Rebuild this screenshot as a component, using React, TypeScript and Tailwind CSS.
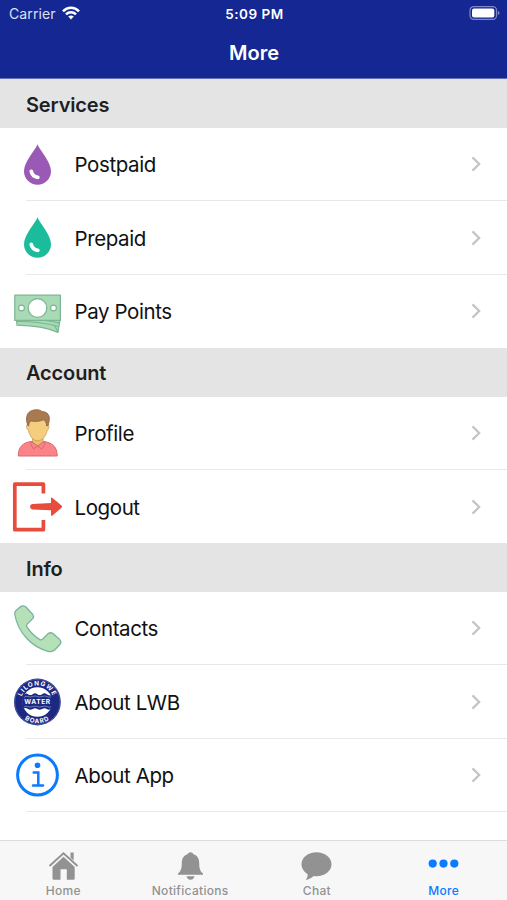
import React from 'react';

function DropIcon({ color }: { color: string }) {
  return (
    <svg viewBox="0 0 51 51" className="w-[51px] h-[51px]">
      <path d="M25.500 5.200C27.500 11 39 22.500 39 32.300A13.500 13.500 0 0 1 12 32.300C12 22.500 23.500 11 25.500 5.200Z" fill={color} />
      <path d="M19.300 32.300C19.800 35.300 22.300 37.800 25.800 38.300" fill="none" stroke="#fff" strokeWidth="3.800" strokeLinecap="round" />
    </svg>
  );
}

function MoneyIcon() {
  return (
    <svg viewBox="0 0 51 51" className="w-[51px] h-[51px]" stroke="#7cb592" strokeWidth="1.200" strokeLinejoin="round">
      <path d="M4.500 34H48L46 46.500C35 41.500 20 39.500 5 39.200Z" fill="#a9dab6" />
      <path d="M5 35.500C20 35.500 34 37 46.500 40.500" fill="none" />
      <path d="M33 34.500C38 35 43 36 47.300 37.200M42.500 39.500L46 46" fill="none" />
      <rect x="2.800" y="9.200" width="45.600" height="25.200" fill="#a9dab6" />
      <circle cx="25.500" cy="22" r="9.300" fill="#fff" />
      <circle cx="9.500" cy="22" r="2.900" fill="#fff" />
      <circle cx="41.500" cy="22" r="2.900" fill="#fff" />
    </svg>
  );
}

function ProfileIcon() {
  return (
    <svg viewBox="0 0 51 51" className="w-[51px] h-[51px]" strokeLinejoin="round">
      <path d="M6.300 49C6.300 39.500 11 35.800 19 34.500H32C40 35.800 45.200 39.500 45.200 49Z" fill="#fb8488" stroke="#d9686e" />
      <path d="M20.500 30V35L25.500 40L31 35V30Z" fill="#edbf6d" stroke="#c99a55" strokeWidth="0.800" />
      <path d="M19.500 34.500L18.500 37L21.500 42L25.600 38.800L29.800 42L33 37L31.800 34.500L25.600 39Z" fill="#fb8488" stroke="#d9686e" />
      <path d="M16 17C13.800 17 14.200 22.500 16.500 23.200C17.500 29 21 33.800 25.600 33.800S34.200 29 35.200 23.200C37.300 22.500 37.600 17 35.500 17L34 10H18Z" fill="#f5cd7f" stroke="#c99a55" strokeWidth="0.800" />
      <path d="M15.800 18.500C12.500 9 15.500 2.700 25 2.700C27.500 2.700 28.500 3.500 30 4.500C38 4.800 38.500 11.500 36 18.500L34.700 19C34.500 16 33.500 14 31.500 12.800C27 15 21 14.500 18.800 14C17.200 15.500 16.800 17 16.800 19Z" fill="#a97950" stroke="#89633f" strokeWidth="0.800" />
    </svg>
  );
}

function LogoutIcon() {
  return (
    <svg viewBox="0 0 51 51" className="w-[51px] h-[51px]" fill="#e74c3c">
      <path d="M31.400 12.500V3.200H2.800V48.700H31.400V39" fill="none" stroke="#e74c3c" strokeWidth="3.700" strokeLinejoin="round" />
      <path d="M20.500 23L39 22V17.500Q39 16 40.500 17L49.500 24.500Q50.500 25.700 49.500 26.800L40.500 34.400Q39 35.500 39 33.900V29.200L20.500 28.400Q18 28 18 25.700T20.500 23Z" />
    </svg>
  );
}

function PhoneIcon() {
  return (
    <svg viewBox="0 0 51 51" className="w-[51px] h-[51px]">
      <path
        d="M2.800 11.500Q2.200 9.300 3.800 7.700L8.600 3.600Q11 2 13.600 3.700L20.800 11.500Q22.200 13.600 20.900 15.400L15 21.300Q14.100 22.500 14.800 23.700C18.300 29.500 22.800 33.600 27.800 36.600Q29.400 37.200 30.500 36.200L36 30.800Q38.500 28.900 41 30.500L47.700 36.600Q49.600 38.700 48.300 41L43 46.800Q40 49.500 36 48.300C19.500 44 6 29.500 2.800 11.500Z"
        fill="#b5e0b8"
        stroke="#79b3a0"
        strokeWidth="1.300"
        strokeLinejoin="round"
      />
    </svg>
  );
}

function BoardIcon() {
  return (
    <svg viewBox="0 0 51 51" className="w-[51px] h-[51px]">
      <defs>
        <path id="seal-top" d="M8.800 26A16.600 16.600 0 0 1 42 26" />
        <path id="seal-bottom" d="M4.100 26A21.300 21.300 0 0 0 46.700 26" />
      </defs>
      <circle cx="25.400" cy="26" r="23.400" fill="#1b2983" />
      <circle cx="25.400" cy="26" r="22.600" fill="none" stroke="#8d95c6" strokeWidth="0.400" />
      <circle cx="25.400" cy="26" r="14.800" fill="#fff" />
      <path d="M11.500 19.500Q13.500 16.500 16 18.200T20.700 18.200T25.400 18.200T30.100 18.200T34.800 18.200T39.500 19.500L41 26L39.500 32.500Q37 34.500 34.800 33T30.100 33T25.400 33T20.700 33T16 33T11.500 32.500L10 26Z" fill="#1b2983" />
      <path d="M12 21.500Q14 19.500 16 20.500T20.700 20.500T25.400 20.500T30.100 20.500T34.800 20.500T39 21M12 31Q14 29.600 16 30.600T20.700 30.600T25.400 30.600T30.100 30.600T34.800 30.600T39 31" fill="none" stroke="#aab0d8" strokeWidth="0.600" />
      <g fill="#fff" fontFamily="Inter, sans-serif" fontWeight="700" textAnchor="middle">
        <text x="25.600" y="28.300" fontSize="6.600" letterSpacing="0.600">WATER</text>
        <text fontSize="6.300" letterSpacing="0.900">
          <textPath href="#seal-top" startOffset="50%">LILONGWE</textPath>
        </text>
        <text fontSize="6.300" letterSpacing="1">
          <textPath href="#seal-bottom" startOffset="50%">BOARD</textPath>
        </text>
      </g>
    </svg>
  );
}

function InfoIcon() {
  return (
    <svg viewBox="0 0 51 51" className="w-[51px] h-[51px]" fill="none" stroke="#0a7aff" strokeWidth="2.500" strokeLinecap="round">
      <circle cx="25.500" cy="26" r="19.900" strokeWidth="3" />
      <circle cx="25.500" cy="16.300" r="2.800" fill="#0a7aff" stroke="none" />
      <path d="M21.700 23.500H26.300V36.500M21 36.500H31" />
    </svg>
  );
}

const sections = [
  {
    title: 'Services',
    items: [
      { label: 'Postpaid', icon: <DropIcon color="#9b59b6" /> },
      { label: 'Prepaid', icon: <DropIcon color="#1abc9c" /> },
      { label: 'Pay Points', icon: <MoneyIcon /> },
    ],
  },
  {
    title: 'Account',
    items: [
      { label: 'Profile', icon: <ProfileIcon /> },
      { label: 'Logout', icon: <LogoutIcon /> },
    ],
  },
  {
    title: 'Info',
    items: [
      { label: 'Contacts', icon: <PhoneIcon /> },
      { label: 'About LWB', icon: <BoardIcon /> },
      { label: 'About App', icon: <InfoIcon /> },
    ],
  },
];

const tabs = [
  {
    label: 'Home',
    icon: (
      <>
        <path d="M1.500 15L15.500 2.200L29.500 15" fill="none" stroke="currentColor" strokeWidth="1.900" />
        <path d="M22.500 1.500H25.700V9.500L22.500 6.600Z" />
        <path d="M15.500 5.800L26.700 16V27.500Q26.700 28.800 25.400 28.800H18.800V18.300H12.500V28.800H5.800Q4.500 28.800 4.500 27.500V16Z" />
      </>
    ),
  },
  {
    label: 'Notifications',
    icon: (
      <>
        <path d="M15.500 1.300C17.200 1.300 18.200 2.300 18.400 3.300C22.500 4.500 24.200 8 24.200 12C24.200 18 25.500 20.500 28 22.600V23.700H3V22.600C5.500 20.500 6.800 18 6.800 12C6.800 8 8.500 4.500 12.600 3.300C12.800 2.300 13.800 1.300 15.500 1.300Z" />
        <path d="M11.500 25.200H19.500Q18.500 28.700 15.500 28.700T11.500 25.200Z" />
      </>
    ),
  },
  {
    label: 'Chat',
    icon: (
      <path d="M15.500 1.200C23.800 1.200 30.500 6.500 30.500 13.200S23.800 25.200 15.500 25.200C14.500 25.200 13.500 25.100 12.600 25C10.500 27 7.500 28.700 4.700 28.900C6 27.300 6.800 25.500 6.600 23C2.900 20.800 .5 17.200 .5 13.200C.5 6.500 7.200 1.200 15.500 1.200Z" />
    ),
  },
  {
    label: 'More',
    active: true,
    icon: (
      <>
        <circle cx="4.700" cy="12.600" r="4.100" />
        <circle cx="15.500" cy="12.600" r="4.100" />
        <circle cx="26.300" cy="12.600" r="4.100" />
      </>
    ),
  },
];

function Header() {
  return (
    <header className="h-[79.300px] shrink-0 bg-[#152792] text-white border-b border-[#6670b5]">
      <div className="h-[27px] grid grid-cols-3 items-center pl-[9px] pr-[7px]">
        <div className="flex items-center gap-[6px]">
          <span className="text-[14px] tracking-[0.1px] text-[#dce0f5]">Carrier</span>
          <svg viewBox="0 0 18 14" className="w-[18px] h-[14px] -mt-px" fill="none" stroke="#fff" strokeWidth="2.500">
            <path d="M1 5.300C5.500 .7 12.500 .7 17 5.300M4 8.400C6.800 5.600 11.200 5.600 14 8.400" />
            <path d="M9 13.500L6.200 10.600Q9 8.300 11.800 10.600Z" fill="#fff" stroke="none" />
          </svg>
        </div>
        <span className="pt-px text-center text-[13.500px] font-semibold tracking-[0.500px]">5:09 PM</span>
        <svg viewBox="0 0 31 14" className="w-[31px] h-[14px] -mt-px justify-self-end">
          <rect x="1" y=".7" width="26.500" height="12.600" rx="3.600" fill="none" stroke="#7d88c6" strokeWidth="1.200" />
          <rect x="3" y="2.600" width="22.300" height="8.800" rx="2" fill="#fff" />
          <path d="M28.800 5V9Q30.600 8.400 30.600 7T28.800 5Z" fill="#7d88c6" />
        </svg>
      </div>
      <h1 className="pt-px pl-px text-center text-[20px] leading-[50px] font-semibold">More</h1>
    </header>
  );
}

export default function App() {
  return (
    <div className="w-full h-[900px] flex flex-col overflow-hidden bg-white font-[Inter,'Liberation_Sans',sans-serif]">
      <Header />
      <main className="flex-1">
        {sections.map((section) => (
          <section key={section.title}>
            <h2 className="h-[48.800px] flex items-center bg-[#e4e4e4] pl-[26px] pt-[2px] text-[20px] font-semibold tracking-[-0.150px] text-[#1f1f1f]">
              {section.title}
            </h2>
            <ul>
              {section.items.map((item, i) => (
                <li key={item.label} className="h-[73.300px] flex flex-col">
                  <div className="flex-1 flex items-center pl-3 pr-[25px]">
                    {item.icon}
                    <span className="ml-[11.500px] pt-[3px] flex-1 text-[20.500px] tracking-[-0.400px] text-[#111]">{item.label}</span>
                    <svg viewBox="0 0 12 18" className="w-3 h-[18px]" fill="none" stroke="#c4c4c7" strokeWidth="2.200">
                      <path d="M2.500 2.400L9.200 9L2.500 15.600" />
                    </svg>
                  </div>
                  {(i < section.items.length - 1 || section.title === 'Info') && (
                    <div className="ml-[26px] h-px bg-[#e8e8ea]" />
                  )}
                </li>
              ))}
            </ul>
          </section>
        ))}
      </main>
      <nav className="h-[60px] shrink-0 grid grid-cols-4 bg-[#f7f7f7] border-t border-[#dcdcdc]">
        {tabs.map((tab) => (
          <div
            key={tab.label}
            className={`flex flex-col items-center pt-[10px] ${tab.active ? 'text-[#0a7aff]' : 'text-[#929292]'}`}
          >
            <svg viewBox="0 0 31 30" className="w-[31px] h-[30px]" fill="currentColor">
              {tab.icon}
            </svg>
            <span className="mt-[3px] text-[12px] leading-[14px] font-medium tracking-[0.300px]">{tab.label}</span>
          </div>
        ))}
      </nav>
    </div>
  );
}
